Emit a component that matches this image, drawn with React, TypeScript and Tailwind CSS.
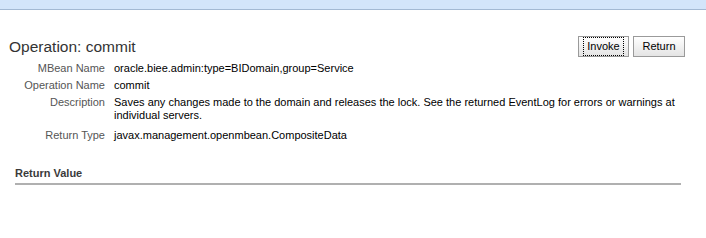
import React from "react";

const rows: [string, React.ReactNode][] = [
  ["MBean Name", "oracle.biee.admin:type=BIDomain,group=Service"],
  ["Operation Name", "commit"],
  [
    "Description",
    "Saves any changes made to the domain and releases the lock. See the returned EventLog for errors or warnings at individual servers.",
  ],
  ["Return Type", "javax.management.openmbean.CompositeData"],
];

export default function App() {
  return (
    <div className="w-[706px] h-[238px] bg-white overflow-hidden" style={{ fontFamily: "Tahoma, 'Liberation Sans', sans-serif" }}>
      <div className="h-[10px] bg-[#d3e5fa] border-b border-[#a3b9d3]" />
      <div className="flex justify-between pl-[9px] pr-[21px] pt-[26px]">
        <div className="text-[15.5px] leading-[18px] text-[#333333] pt-[2px]">Operation: commit</div>
        <div className="flex gap-[4px]">
          <button className="w-[51px] h-[21px] text-[11px] text-black bg-gradient-to-b from-white to-[#e4e4e4] border border-[#9a9a9a] flex items-center justify-center">
            <span className="outline-1 outline-dotted outline-black px-[3px]">Invoke</span>
          </button>
          <button className="w-[52px] h-[21px] text-[11px] text-black bg-gradient-to-b from-white to-[#e4e4e4] border border-[#9a9a9a] flex items-center justify-center">
            Return
          </button>
        </div>
      </div>
      <div className="grid grid-cols-[105px_1fr] gap-x-[9px] mt-[1px] pr-[30px] text-[11px] leading-[13px]">
        {rows.map(([k, v], i) => (
          <React.Fragment key={i}>
            <div className={`text-right text-[#555555] ${i === 3 ? "pt-[7px]" : "pt-[4px]"}`}>{k}</div>
            <div className={`text-black ${i === 3 ? "pt-[7px]" : "pt-[4px]"}`}>{v}</div>
          </React.Fragment>
        ))}
      </div>
      <div className="ml-[15px] mr-[25px] mt-[23px] pb-[1px] border-b-2 border-[#b0b0b0] text-[11px] font-bold text-[#3a3a3a]">
        Return Value
      </div>
    </div>
  );
}
